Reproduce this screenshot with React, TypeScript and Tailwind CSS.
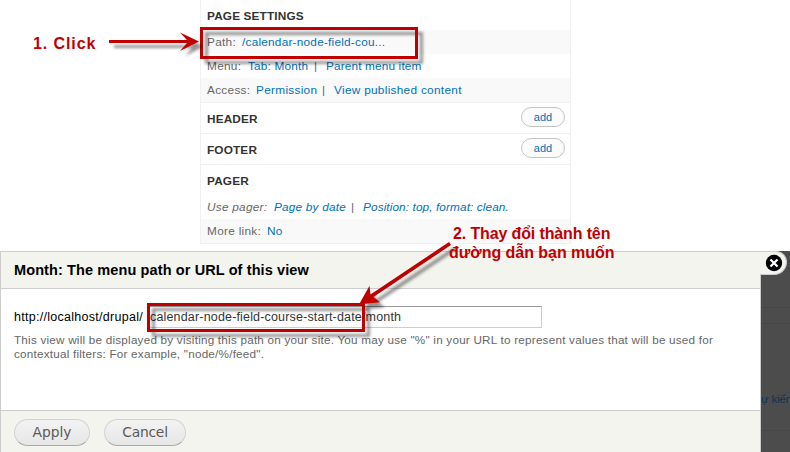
import type { ReactNode } from "react";

function Row({ shaded = false, italic = false, children }: { shaded?: boolean; italic?: boolean; children: ReactNode }) {
  return (
    <div
      className={`flex h-6 items-center whitespace-pre pl-1.5 text-[11.8px] leading-6 text-[#666] ${
        shaded ? "bg-[#f9f9f9]" : "bg-white"
      } ${italic ? "italic tracking-[0.1px]" : "tracking-[0.3px]"}`}
    >
      {children}
    </div>
  );
}

function Link({ className, children }: { className: string; children: ReactNode }) {
  return <a className={`shrink-0 text-[#0071b8] ${className}`}>{children}</a>;
}

function Heading({ children }: { children: ReactNode }) {
  return <h3 className="text-[11.8px] font-bold leading-4 tracking-[0.15px] text-[#333]">{children}</h3>;
}

function AddButton() {
  return (
    <button className="flex h-5 w-11 items-center justify-center rounded-full border border-[#c4c4c4] bg-[#fbfbfb] text-[11px] leading-none text-[#0071b8]">
      add
    </button>
  );
}

function SettingsPanel() {
  return (
    <section className="ml-[200px] h-[244px] w-[371px] border-x border-b border-[#f1f1f1] bg-white">
      <div className="h-[30px] pl-1.5 pt-2">
        <Heading>PAGE SETTINGS</Heading>
      </div>
      <Row shaded>
        <span className="w-[35px]">Path:</span>
        <Link className="tracking-[0.23px]">/calendar-node-field-cou...</Link>
      </Row>
      <Row>
        <span className="w-[41px]">Menu:</span>
        <Link className="w-[66px] tracking-[0.2px]">Tab: Month</Link>
        <span className="w-[12px]">|</span>
        <Link className="tracking-[0.15px]">Parent menu item</Link>
      </Row>
      <Row shaded>
        <span className="w-[49px]">Access:</span>
        <Link className="w-[66px]">Permission</Link>
        <span className="w-[12px]">|</span>
        <Link className="">View published content</Link>
      </Row>
      <div className="flex h-[31px] items-center justify-between border-t border-[#f1f1f1] pl-1.5 pr-[5px]">
        <div className="pt-0.5"><Heading>HEADER</Heading></div>
        <div className="pb-0.5"><AddButton /></div>
      </div>
      <div className="flex h-[31px] items-center justify-between border-t border-[#f1f1f1] pl-1.5 pr-[5px]">
        <div className="pt-0.5"><Heading>FOOTER</Heading></div>
        <div className="pb-0.5"><AddButton /></div>
      </div>
      <div className="h-[31px] border-t border-[#f1f1f1] pl-1.5 pt-2">
        <Heading>PAGER</Heading>
      </div>
      <Row italic>
        <span className="w-[67px] tracking-[0.25px]">Use pager:</span>
        <Link className="w-[77px] tracking-[0.2px]">Page by date</Link>
        <span className="w-[12px] not-italic">|</span>
        <Link className="">Position: top, format: clean.</Link>
      </Row>
      <Row shaded>
        <span className="w-[60px]">More link:</span>
        <Link className="">No</Link>
      </Row>
    </section>
  );
}

function DialogButton({ className, children }: { className: string; children: ReactNode }) {
  return (
    <button
      className={`flex h-[27px] items-center justify-center rounded-full border border-[#d2d2d2] border-b-[#aaa] bg-gradient-to-b from-[#f3f3f3] to-[#e6e6e6] font-['DejaVu_Sans'] text-[13.8px] leading-none text-[#5a5a5a] ${className}`}
    >
      {children}
    </button>
  );
}

function Dialog() {
  return (
    <div className="mt-[7px] flex h-[201px] bg-[#4c4c4c]">
      <section className="flex h-full w-[761px] shrink-0 flex-col border-x border-t border-[#ccc] bg-white">
        <header className="flex h-[37px] shrink-0 items-center border-b border-[#ccc] bg-[#f3f4ee] pl-[13px] pt-0.5">
          <h2 className="whitespace-nowrap text-[14.5px] font-bold tracking-[0.11px] text-black">Month: The menu path or URL of this view</h2>
        </header>
        <div className="h-[121px] shrink-0 pl-[13px] pt-[17px]">
          <label className="flex h-[22px] items-center whitespace-nowrap text-[12.5px] text-black">
            <span className="w-[134px] tracking-[0.28px]">http://localhost/drupal/</span>
            <span className="flex h-[22px] w-[394px] items-center border border-[#ccc] border-t-[#999] bg-white pl-px tracking-[0.17px] text-[#333]">
              calendar-node-field-course-start-date/month
            </span>
          </label>
          <p className="mt-[5px] whitespace-pre text-[11.7px] leading-[14px] tracking-[0.225px] text-[#666]">
            {'This view will be displayed by visiting this path on your site. You may use "%" in your URL to represent values that will be used for\ncontextual filters: For example, "node/%/feed".'}
          </p>
        </div>
        <footer className="flex grow items-start gap-3.5 border-t border-[#ccc] bg-[#f3f4ee] pl-[13px] pt-2">
          <DialogButton className="w-[76px] pt-px">Apply</DialogButton>
          <DialogButton className="w-[82px] pt-px tracking-[-0.2px]">Cancel</DialogButton>
        </footer>
      </section>
      <aside className="flex grow flex-col">
        <div className="-ml-px flex h-6 w-[27px] items-center rounded-br-[14px] rounded-tr-[12px] border-b border-r border-t border-[#ccc] bg-[#f3f4ee] pl-[5px]">
          <svg width="18" height="18" viewBox="0 0 18 18" className="shrink-0">
            <circle cx="9" cy="9" r="8.2" fill="#000" />
            <path d="M5.5 5.5l7 7M12.5 5.5l-7 7" stroke="#fff" strokeWidth="2.3" />
          </svg>
        </div>
        <div className="h-[33px] border-b border-[#464646]" />
        <div className="h-4 border-b border-[#464646]" />
        <div className="h-[107px] whitespace-nowrap border-b border-[#464646] pt-[67px] text-[11.5px] leading-4 tracking-[-0.15px] text-[#0b3552]">ự kiến</div>
      </aside>
    </div>
  );
}

function Annotations() {
  return (
    <div className="pointer-events-none absolute inset-0 font-bold text-[#c00000]">
      <svg width="790" height="452" className="absolute inset-0">
        <defs>
          <filter id="shadow" x="-20%" y="-50%" width="150%" height="220%">
            <feDropShadow dx="5" dy="5" stdDeviation="1.7" floodColor="#000" floodOpacity="0.42" />
          </filter>
        </defs>
        <g fill="none" stroke="#c00000" strokeWidth="3">
          <rect x="201.5" y="28.5" width="215" height="29" filter="url(#shadow)" />
          <rect x="148.5" y="304.5" width="215" height="26" filter="url(#shadow)" />
        </g>
        <g fill="#c00000" filter="url(#shadow)">
          <path d="M109 40H187L180 32.5L199 41.5L180 51L187 43H109Z" />
          <path d="M449 242L451 245L373.5 297L380 302.3L359 304.5L369.5 285.7L370.5 294.5Z" />
        </g>
      </svg>
      <span className="absolute left-[33px] top-[34px] whitespace-nowrap text-[16px] leading-5 tracking-[0.9px]">1. Click</span>
      <span className="absolute left-[453px] top-[224px] whitespace-nowrap text-[16px] leading-5 tracking-[-0.13px]">2. Thay đổi thành tên</span>
      <span className="absolute left-[449px] top-[243px] whitespace-nowrap text-[16px] leading-5 tracking-[-0.03px]">đường dẫn bạn muốn</span>
    </div>
  );
}

export default function App() {
  return (
    <main className="relative h-[452px] w-[790px] overflow-hidden bg-white font-['Liberation_Sans',Arial,sans-serif]">
      <SettingsPanel />
      <Dialog />
      <Annotations />
    </main>
  );
}
